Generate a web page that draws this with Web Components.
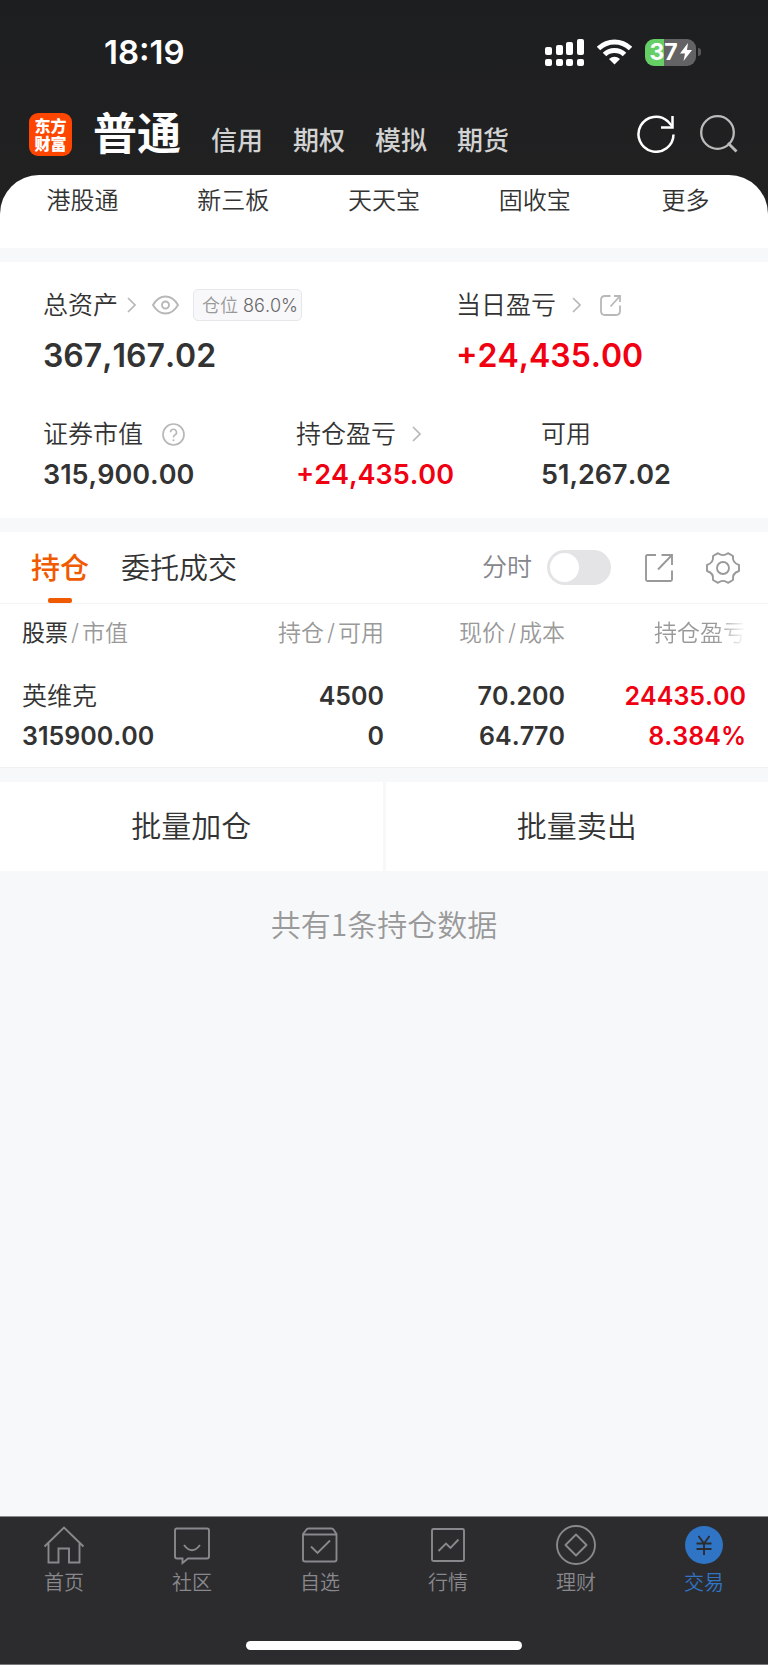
<!DOCTYPE html>
<html lang="zh-CN">
<head>
<meta charset="utf-8">
<meta name="viewport" content="width=device-width, initial-scale=1">
<title>交易 - 东方财富</title>
<style>
body{
    margin: 0;
    min-height: 100vh;
    display: flex;
    flex-direction: column;
    background-color: #f7f8fa;
    color: #333;
    font-family: Inter, "Noto Sans CJK SC", sans-serif;
    font-weight: 350;
    font-kerning: none;
}
trade-header{
    background: linear-gradient(#1d1e20, #222);
}
asset-summary, holdings-panel, batch-actions{
    margin-top: 14px;
}
tab-bar{
    margin-top: auto;
}
</style>
</head>
<body>
    <trade-header>
        <status-bar slot="status" time="18:19" battery="37"></status-bar>
        <quick-links slot="links"></quick-links>
    </trade-header>
    <asset-summary></asset-summary>
    <holdings-panel></holdings-panel>
    <batch-actions></batch-actions>
    <list-footer>共有1条持仓数据</list-footer>
    <tab-bar></tab-bar>

<script>
// name: [width, height, markup]
const icons = {
    refresh: [38, 38, '<path d="M36.500 19.500A17.500 17.500 0 1 1 31 6.500L35 11" stroke-width="2.500"/><path d="M35.500 1V12.500H24" stroke-width="2.500"/>'],
    search: [38, 38, '<circle cx="17.500" cy="17.500" r="16.300" stroke-width="2.300"/><path d="M28 28L36.500 36.500" stroke-width="2.800"/>'],
    chevron: [9, 16, '<path d="M1 1L8 8L1 15" stroke-width="1.700"/>'],
    eye: [27, 20, '<path d="M1 10Q6 1.500 13.500 1.500T26 10Q21 18.500 13.500 18.500T1 10Z" stroke-width="1.900"/><circle cx="13.500" cy="10" r="3.500" stroke-width="1.900"/>'],
    help: [23, 23, '<circle cx="11.500" cy="11.500" r="10.500" stroke-width="1.700"/><path d="M8.500 9.300A3 3 0 1 1 12.800 12Q11.500 12.700 11.500 14.500" stroke-width="1.600"/><circle cx="11.500" cy="17.200" r="1" fill="currentColor" stroke="none"/>'],
    share: [21, 21, '<path d="M10.500 1H5Q1 1 1 5V16Q1 20 5 20H16Q20 20 20 16V10.500M10.500 11.500L19.500 1.500M14 1H20V7" stroke-width="1.800"/>'],
    export: [28, 28, '<path d="M11 1H2.500Q1 1 1 2.500V25.500Q1 27 2.500 27H25.500Q27 27 27 25.500V16.500M16.500 1H27V11M27 1L13 15.500" stroke-width="1.900"/>'],
    gear: [34, 32, '<path d="M12 1.200Q17 5 22 1.200L27 4Q26 10.500 33 13V19Q26 21 27 28L22 30.800Q17 27 12 30.800L7 28Q8 21 1 19V13Q8 10.500 7 4Z" stroke-width="1.900" stroke-linejoin="round"/><circle cx="17" cy="16" r="6" stroke-width="1.900"/>'],
    home: [42, 40, '<path d="M1.500 21.500L21 2.500L40.500 21.500M5.500 18V37.500H15.500V23.500H26V37.500H36.500V18" stroke-width="1.900"/>'],
    community: [42, 40, '<path d="M5 3.500H36Q38 3.500 38 5.500V31.500Q38 33.500 36 33.500H17L11.500 38V33.500H6Q4 33.500 4 31.500V5.500Q4 3.500 6 3.500Z" stroke-width="1.900"/><path d="M13 20Q21 30.500 29 20" stroke-width="1.900"/>'],
    watchlist: [42, 40, '<path d="M4 9L7.500 4.500Q8 3.500 9.500 3.500H32.500Q34 3.500 34.500 4.500L37.500 9V34.500Q37.500 36.500 35.500 36.500H6Q4 36.500 4 34.500ZM4 9.500H37.500M12 21.500L18.500 28L31 15.500" stroke-width="1.900"/>'],
    market: [42, 40, '<rect x="5" y="4" width="32" height="32" rx="1.500" stroke-width="1.900"/><path d="M11.500 26L19 18.500L23.500 23L31.500 14.500" stroke-width="1.900"/>'],
    wealth: [42, 40, '<circle cx="21" cy="20" r="19" stroke-width="1.900"/><path d="M21 9.500L31.500 20L21 30.500L10.500 20Z" stroke-width="1.900" stroke-linejoin="round"/>'],
    trade: [42, 40, '<circle cx="21" cy="20" r="19" fill="currentColor" stroke="none"/><path d="M15.500 11L21 18.500L26.500 11M13.500 18.500H28.500M13.500 24H28.500M21 18.500V30" stroke="#2c2c2e" stroke-width="1.900"/>'],
    signal: [39, 28, '<g fill="currentColor" stroke="none"><rect y="9" width="7" height="8" rx="2"/><rect x="11" y="7" width="7" height="10" rx="2"/><rect x="21" y="4" width="7" height="13" rx="2"/><rect x="32" y="1" width="7" height="16" rx="2"/><rect y="21" width="7" height="7" rx="2"/><rect x="11" y="21" width="7" height="7" rx="2"/><rect x="21" y="21" width="7" height="7" rx="2"/><rect x="32" y="21" width="7" height="7" rx="2"/></g>'],
    wifi: [35, 26, '<path d="M1.500 9.500Q8.500 3 17.500 3T33.500 9.500M7.500 15.500Q11.500 11.500 17.500 11.500T27.500 15.500" stroke-width="5"/><path d="M12 20Q17.500 15.500 23 20L17.500 25.500Z" fill="currentColor" stroke="none"/>'],
    bolt: [12, 18, '<path d="M8 0L0 10.500H5L3.500 18L12 7H7Z" fill="currentColor" stroke="none"/>']
};

class AppIcon extends HTMLElement {
    connectedCallback() {
        const [w, h, body] = icons[this.getAttribute('name')];
        this.attachShadow({ mode: 'open' }).innerHTML = `
        <style>
        :host{ display: inline-flex; flex: none; }
        svg{ display: block; }
        </style>
        <svg width="${w}" height="${h}" viewBox="0 0 ${w} ${h}" fill="none" stroke="currentColor" aria-hidden="true">${body}</svg>`;
    }
}
customElements.define('app-icon', AppIcon);

class StatusBar extends HTMLElement {
    connectedCallback() {
        this.attachShadow({ mode: 'open' }).innerHTML = `
        <style>
        :host{
            display: flex;
            align-items: center;
            justify-content: space-between;
            height: 104px;
            padding: 0 67px 0 104px;
            color: #fff;
        }
        .time{ font-size: 33px; font-weight: 600; }
        .icons{ display: flex; align-items: center; gap: 13px; }
        .power{ display: flex; align-items: center; gap: 2px; }
        .battery{
            display: flex;
            align-items: center;
            justify-content: center;
            gap: 2px;
            width: 51px;
            height: 27px;
            border-radius: 9px;
            background: linear-gradient(90deg, #65cf66 37%, #636365 37%);
            font-size: 23px;
            font-weight: 700;
            line-height: 27px;
        }
        .nub{ width: 3px; height: 8px; border-radius: 0 3px 3px 0; background-color: #58585a; }
        </style>
        <span class="time">${this.getAttribute('time')}</span>
        <div class="icons">
            <app-icon name="signal"></app-icon>
            <app-icon name="wifi"></app-icon>
            <div class="power">
                <div class="battery"><span>${this.getAttribute('battery')}</span><app-icon name="bolt"></app-icon></div>
                <div class="nub"></div>
            </div>
        </div>`;
    }
}
customElements.define('status-bar', StatusBar);

class TradeHeader extends HTMLElement {
    connectedCallback() {
        this.attachShadow({ mode: 'open' }).innerHTML = `
        <style>
        :host{ display: block; }
        .bar{
            display: flex;
            align-items: center;
            height: 71px;
            padding: 0 30px 0 29px;
        }
        .logo{
            display: flex;
            flex-direction: column;
            align-items: center;
            justify-content: center;
            width: 43px;
            height: 43px;
            margin: 0 21px 10px 0;
            border-radius: 9px;
            background-color: #ff4600;
            color: #fff;
            font-size: 16px;
            font-weight: 900;
            line-height: 18px;
            text-decoration: none;
        }
        nav{
            flex: 1;
            display: flex;
            align-items: baseline;
            gap: 30px;
            margin-bottom: 4px;
        }
        nav a{
            color: #d2d2d2;
            font-size: 26px;
            font-weight: 500;
            line-height: 56px;
            text-decoration: none;
        }
        nav a.active{ color: #fff; font-size: 44px; font-weight: 700; }
        .tools{ display: flex; gap: 25px; margin-bottom: 12px; }
        button{
            display: flex;
            padding: 0;
            border: 0;
            background: none;
            color: #fff;
        }
        button + button{ color: #bbb; }
        .panel{
            border-radius: 39px 39px 0 0;
            background-color: #fff;
        }
        </style>
        <slot name="status"></slot>
        <div class="bar">
            <a class="logo" href="#"><span>东方</span><span>财富</span></a>
            <nav>
                <a class="active" href="#">普通</a>
                <a href="#">信用</a>
                <a href="#">期权</a>
                <a href="#">模拟</a>
                <a href="#">期货</a>
            </nav>
            <div class="tools">
                <button aria-label="刷新"><app-icon name="refresh"></app-icon></button>
                <button aria-label="搜索"><app-icon name="search"></app-icon></button>
            </div>
        </div>
        <div class="panel"><slot name="links"></slot></div>`;
    }
}
customElements.define('trade-header', TradeHeader);

class QuickLinks extends HTMLElement {
    connectedCallback() {
        const links = ['港股通', '新三板', '天天宝', '固收宝', '更多'];
        this.attachShadow({ mode: 'open' }).innerHTML = `
        <style>
        :host{
            display: grid;
            grid-template-columns: repeat(5, 1fr);
            padding: 9px 7px 31px;
        }
        a{
            color: #333;
            font-size: 24px;
            line-height: 33px;
            text-align: center;
            text-decoration: none;
        }
        </style>
        ${links.map(t => `<a href="#">${t}</a>`).join('')}`;
    }
}
customElements.define('quick-links', QuickLinks);

// label with optional icons in the slot, value under it
class AssetItem extends HTMLElement {
    connectedCallback() {
        this.attachShadow({ mode: 'open' }).innerHTML = `
        <style>
        :host{ display: block; }
        .label{
            display: flex;
            align-items: center;
            height: 32px;
            font-size: 25px;
            line-height: 32px;
            white-space: nowrap;
        }
        .value{
            margin-top: 9px;
            font-size: 27px;
            font-weight: 600;
            line-height: 32px;
        }
        :host([large]) .value{ margin-top: 15px; font-size: 32px; line-height: 40px; }
        :host([up]) .value{ color: #f00010; }
        ::slotted(app-icon){ color: #b8b8b8; }
        </style>
        <div class="label"><span>${this.getAttribute('label')}</span><slot></slot></div>
        <div class="value">${this.getAttribute('value')}</div>`;
    }
}
customElements.define('asset-item', AssetItem);

class AssetSummary extends HTMLElement {
    connectedCallback() {
        this.attachShadow({ mode: 'open' }).innerHTML = `
        <style>
        :host{
            display: block;
            padding: 27px 43px;
            background-color: #fff;
        }
        .row{ display: grid; grid-template-columns: 413fr 269fr; }
        .row + .row{ margin-top: 42px; grid-template-columns: 253fr 245fr 184fr; }
        app-icon{ margin-left: 16px; }
        app-icon.near{ margin-left: 9px; }
        app-icon.far{ margin-left: 19px; }
        .badge{
            box-sizing: border-box;
            height: 32px;
            margin-left: 14px;
            padding: 0 3px 0 8px;
            border: 1px solid #e6e7ea;
            border-radius: 5px;
            background-color: #f8f8fa;
            color: #999;
            font-size: 18px;
            line-height: 31px;
        }
        .badge b{ color: #666; font-weight: 350; }
        </style>
        <div class="row">
            <asset-item large label="总资产" value="367,167.02">
                <app-icon class="near" name="chevron"></app-icon>
                <app-icon name="eye"></app-icon>
                <span class="badge">仓位 <b>86.0%</b></span>
            </asset-item>
            <asset-item large up label="当日盈亏" value="+24,435.00">
                <app-icon name="chevron"></app-icon>
                <app-icon class="far" name="share"></app-icon>
            </asset-item>
        </div>
        <div class="row">
            <asset-item label="证券市值" value="315,900.00">
                <app-icon class="far" name="help"></app-icon>
            </asset-item>
            <asset-item up label="持仓盈亏" value="+24,435.00">
                <app-icon name="chevron"></app-icon>
            </asset-item>
            <asset-item label="可用" value="51,267.02"></asset-item>
        </div>`;
    }
}
customElements.define('asset-summary', AssetSummary);

class HoldingsPanel extends HTMLElement {
    connectedCallback() {
        this.attachShadow({ mode: 'open' }).innerHTML = `
        <style>
        :host{
            display: block;
            background-color: #fff;
            border-bottom: 1px solid #eff0f2;
        }
        .toolbar{
            display: flex;
            align-items: center;
            height: 71px;
            padding: 0 28px 0 31px;
            border-bottom: 1px solid #f4f4f5;
        }
        .tabs{ display: flex; gap: 32px; flex: 1; }
        button{
            padding: 0;
            border: 0;
            background: none;
            color: inherit;
            font: inherit;
        }
        .tabs button{
            display: flex;
            flex-direction: column;
            align-items: center;
            height: 71px;
            font-size: 29px;
            line-height: 73px;
        }
        .tabs button.active{ color: #f05a00; font-weight: 500; }
        .tabs button.active::after{
            content: "";
            flex: none;
            width: 24px;
            height: 5px;
            margin-top: -7px;
            border-radius: 2px;
            background-color: #f05a00;
        }
        .tools{ display: flex; align-items: center; color: #999; }
        label{
            display: flex;
            align-items: center;
            gap: 15px;
            color: #85858c;
            font-size: 25px;
            line-height: 35px;
        }
        input{
            appearance: none;
            box-sizing: border-box;
            width: 64px;
            height: 35px;
            margin: 0 34px 0 0;
            padding: 3px;
            border-radius: 18px;
            background-color: #e4e4e6;
        }
        input::before{
            content: "";
            display: block;
            width: 29px;
            height: 29px;
            border-radius: 50%;
            background-color: #fff;
        }
        input:checked{ background-color: #f05a00; }
        input:checked::before{ margin-left: auto; }
        .tools button{ display: flex; }
        .tools button + button{ margin-left: 33px; }
        .table{ padding: 0 22px 11px; }
        table{ width: 100%; border-collapse: collapse; table-layout: fixed; }
        th, td{ padding: 0; text-align: right; white-space: nowrap; }
        th:first-child, td:first-child{ text-align: left; }
        th{
            color: #999;
            font-size: 23px;
            font-weight: 350;
            line-height: 58px;
        }
        th b{ color: #333; font-weight: 400; }
        th i{ margin: 0 3px; font-style: normal; }
        th:last-child span{
            color: transparent;
            background: linear-gradient(90deg, #999 68%, #fff);
            -webkit-background-clip: text;
            background-clip: text;
        }
        td{ font-size: 25px; font-weight: 600; line-height: 40px; }
        tbody tr:first-child td{ padding-top: 14px; }
        td.name{ font-weight: 350; }
        td.up{ color: #f00010; }
        </style>
        <div class="toolbar">
            <div class="tabs">
                <button class="active">持仓</button>
                <button>委托成交</button>
            </div>
            <div class="tools">
                <label>分时<input type="checkbox" role="switch"></label>
                <button aria-label="分享"><app-icon name="export"></app-icon></button>
                <button aria-label="设置"><app-icon name="gear"></app-icon></button>
            </div>
        </div>
        <div class="table">
            <table>
                <thead>
                    <tr>
                        <th><b>股票</b><i>/</i>市值</th>
                        <th>持仓<i>/</i>可用</th>
                        <th>现价<i>/</i>成本</th>
                        <th><span>持仓盈亏</span></th>
                    </tr>
                </thead>
                <tbody>
                    <tr><td class="name">英维克</td><td>4500</td><td>70.200</td><td class="up">24435.00</td></tr>
                    <tr><td>315900.00</td><td>0</td><td>64.770</td><td class="up">8.384%</td></tr>
                </tbody>
            </table>
        </div>`;
    }
}
customElements.define('holdings-panel', HoldingsPanel);

class BatchActions extends HTMLElement {
    connectedCallback() {
        this.attachShadow({ mode: 'open' }).innerHTML = `
        <style>
        :host{
            display: grid;
            grid-template-columns: 1fr 1fr;
            gap: 3px;
        }
        button{
            height: 89px;
            padding: 0;
            border: 0;
            background-color: #fff;
            color: #333;
            font: inherit;
            font-size: 30px;
            line-height: 89px;
        }
        </style>
        <button>批量加仓</button>
        <button>批量卖出</button>`;
    }
}
customElements.define('batch-actions', BatchActions);

class ListFooter extends HTMLElement {
    connectedCallback() {
        this.attachShadow({ mode: 'open' }).innerHTML = `
        <style>
        :host{
            display: block;
            padding: 32px 0;
            color: #999;
            font-family: "Noto Sans CJK SC", sans-serif;
            font-size: 30px;
            line-height: 40px;
            text-align: center;
        }
        </style>
        <slot></slot>`;
    }
}
customElements.define('list-footer', ListFooter);

class TabBar extends HTMLElement {
    connectedCallback() {
        const tabs = [
            ['home', '首页'],
            ['community', '社区'],
            ['watchlist', '自选'],
            ['market', '行情'],
            ['wealth', '理财'],
            ['trade', '交易']
        ];
        this.attachShadow({ mode: 'open' }).innerHTML = `
        <style>
        :host{
            display: block;
            border-top: 1px solid #8a8a8e;
            border-bottom: 1px solid #77777b;
            background-color: #2c2c2e;
        }
        nav{ display: grid; grid-template-columns: repeat(6, 1fr); padding-top: 8px; }
        a{
            display: flex;
            flex-direction: column;
            align-items: center;
            gap: 6px;
            color: #88888d;
            font-size: 20px;
            line-height: 24px;
            text-decoration: none;
        }
        a.active{ color: #2f74c5; }
        .home-indicator{
            width: 36%;
            height: 9px;
            margin: 46px auto 14px;
            border-radius: 5px;
            background-color: #fff;
        }
        </style>
        <nav>
            ${tabs.map(([icon, text]) => `<a href="#"${icon === 'trade' ? ' class="active"' : ''}><app-icon name="${icon}"></app-icon><span>${text}</span></a>`).join('')}
        </nav>
        <div class="home-indicator"></div>`;
    }
}
customElements.define('tab-bar', TabBar);
</script>
</body>
</html>
